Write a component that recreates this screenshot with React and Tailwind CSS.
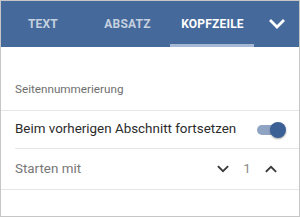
import { useState } from 'react';

function Chevron({ up = false, className = '', width = 2.4 }) {
  return (
    <svg viewBox="0 0 24 24" className={className} fill="none" stroke="currentColor" strokeWidth={width} strokeLinecap="square">
      {up ? <path d="M6 15l6-6 6 6" /> : <path d="M6 9l6 6 6-6" />}
    </svg>
  );
}

const tabs = ['Text', 'Absatz', 'Kopfzeile'];

export default function App() {
  const [active, setActive] = useState(2);
  const [on, setOn] = useState(true);
  const [start, setStart] = useState(1);

  return (
    <div className="w-[300px] h-[217px] border border-[#c6c6c6] bg-white overflow-hidden font-['Roboto',sans-serif]">
      {/* Tab bar */}
      <div className="flex h-[46px] bg-[#45699b]">
        {tabs.map((t, i) => (
          <button
            key={t}
            onClick={() => setActive(i)}
            className={`relative w-[85px] first:w-[84px] flex items-center justify-center text-[12px] font-bold uppercase tracking-[0.2px] ${
              active === i ? 'text-white' : 'text-white/70'
            }`}
          >
            {t}
            {active === i && <span className="absolute left-0 right-[1px] bottom-0 h-[3px] bg-[#a4b8d3]" />}
          </button>
        ))}
        <div className="flex-1 flex items-center justify-center text-white">
          <Chevron className="w-[24px] h-[24px]" width={2.8} />
        </div>
      </div>

      {/* Section header */}
      <div className="h-[64px] flex items-end pb-[13px] px-[14px] border-b border-[#e6e6e6]">
        <p className="text-[11.7px] leading-[16px] text-[#6e6e6e]">Seitennummerierung</p>
      </div>

      {/* Continue toggle */}
      <div className="ml-[14px] h-[38px] flex items-center justify-between pr-[13px] border-b border-[#e6e6e6]">
        <span className="text-[13.4px] text-[#2b2b2b]">Beim vorherigen Abschnitt fortsetzen</span>
        <button onClick={() => setOn(!on)} className="relative w-[30px] h-[16px] flex items-center">
          <span className={`absolute left-[1px] right-[4px] h-[10px] rounded-full ${on ? 'bg-[#8fa3c3]' : 'bg-[#c4c4c4]'}`} />
          <span
            className={`absolute w-[16px] h-[16px] rounded-full shadow-[0_1px_2px_rgba(0,0,0,0.35)] ${
              on ? 'right-0 bg-[#3b6095]' : 'left-0 bg-[#f1f1f1]'
            }`}
          />
        </button>
      </div>

      {/* Start with */}
      <div className="h-[41px] px-[14px] flex items-center justify-between border-b border-[#e6e6e6]">
        <span className="text-[13.4px] text-[#777777]">Starten mit</span>
        <div className="flex items-center text-[#3a3a3a] pr-[2px]">
          <button onClick={() => setStart(Math.max(1, start - 1))} className="w-[24px] h-[24px] flex items-center justify-center">
            <Chevron className="w-[18px] h-[18px]" />
          </button>
          <span className="w-[24px] text-center text-[13.4px] text-[#8a8a8a]">{start}</span>
          <button onClick={() => setStart(start + 1)} className="w-[24px] h-[24px] flex items-center justify-center">
            <Chevron up className="w-[18px] h-[18px]" />
          </button>
        </div>
      </div>
    </div>
  );
}
